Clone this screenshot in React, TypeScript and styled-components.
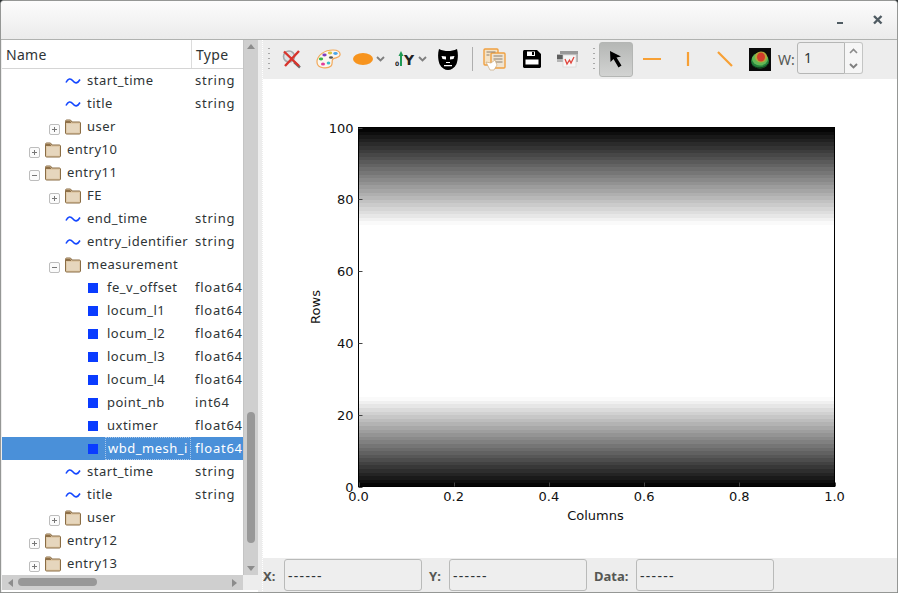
import React from 'react'
import styled, { createGlobalStyle } from 'styled-components'

const GlobalStyle = createGlobalStyle`
  html, body {
    margin: 0;
    padding: 0;
    background: #2e3436;
  }
  * {
    box-sizing: border-box;
  }
`

const Window = styled.div`
  width: 898px;
  height: 593px;
  display: flex;
  flex-direction: column;
  overflow: hidden;
  background: #ededed;
  border: 1px solid #959795;
  border-radius: 4px 4px 0 0;
  font-family: "Noto Sans", "DejaVu Sans", sans-serif;
  font-size: 13px;
  color: #2e3436;
`

const TitleBar = styled.div`
  height: 39px;
  flex: none;
  display: flex;
  justify-content: flex-end;
  align-items: flex-start;
  gap: 29px;
  padding: 14px 14px 0 0;
  background: linear-gradient(#fcfcfc, #ebebeb);
  border-bottom: 1px solid #b0b2b0;
`

const Body = styled.div`
  flex: 1;
  display: flex;
  min-height: 0;
`

const TreePanel = styled.div`
  width: 256px;
  flex: none;
  margin-left: 1px;
  display: grid;
  grid-template-columns: 241px 15px;
  grid-template-rows: 535px 15px;
  background: #fff;
`

const TreeView = styled.div`
  overflow: hidden;
  background: #fff;
`

const HeaderRow = styled.div`
  height: 29px;
  display: flex;
  align-items: center;
  border-bottom: 1px solid #d5d5d5;
  font-size: 14px;
  letter-spacing: 0.3px;
`

const HeaderCell = styled.div<{ $width: number; $divider?: boolean }>`
  width: ${p => p.$width}px;
  height: 28px;
  padding-left: 4px;
  line-height: 30px;
  border-right: ${p => (p.$divider ? '1px solid #dcdcdc' : 'none')};
`

const Row = styled.div<{ $selected?: boolean }>`
  height: 23px;
  display: flex;
  align-items: center;
  white-space: nowrap;
  overflow: hidden;
  color: ${p => (p.$selected ? '#fff' : '#2e3436')};
  background: ${p => (p.$selected ? '#4a90d9' : 'transparent')};
`

const NameCell = styled.div<{ $depth: number }>`
  width: 189px;
  height: 100%;
  flex: none;
  display: flex;
  align-items: center;
  padding-left: ${p => 27 + p.$depth * 20}px;
  overflow: hidden;
`

const TypeCell = styled.div`
  padding-left: 4px;
  line-height: 23px;
  height: 23px;
  letter-spacing: 0.75px;
`

const Expander = styled.span`
  width: 11px;
  height: 11px;
  flex: none;
  margin-right: 5px;
`

const NodeIcon = styled.span<{ $focused?: boolean }>`
  width: 16px;
  height: 16px;
  flex: none;
  margin-right: ${p => (p.$focused ? '4px' : '6px')};
  display: flex;
  align-items: center;
  justify-content: center;
`

const NodeLabel = styled.span<{ $focused?: boolean }>`
  letter-spacing: 0.5px;
  line-height: 21px;
  ${p =>
    p.$focused
      ? `
    flex: 1;
    height: 100%;
    padding-left: 2px;
    border: 1px dotted #a9c8ea;
  `
      : ''}
`

const VScrollTrack = styled.div`
  background: #cfcfcf;
  display: flex;
  flex-direction: column;
  align-items: center;
  padding-top: 372px;
  position: relative;
  border-left: 1px solid #c4c4c4;
`

const VThumb = styled.div`
  width: 8px;
  height: 131px;
  border-radius: 4px;
  background: #989898;
`

const ScrollArrow = styled.svg<{ $top?: number; $bottom?: number; $left?: number; $right?: number }>`
  position: absolute;
  ${p => (p.$top !== undefined ? `top: ${p.$top}px;` : '')}
  ${p => (p.$bottom !== undefined ? `bottom: ${p.$bottom}px;` : '')}
  ${p => (p.$left !== undefined ? `left: ${p.$left}px;` : '')}
  ${p => (p.$right !== undefined ? `right: ${p.$right}px;` : '')}
`

const HScrollTrack = styled.div`
  background: #cfcfcf;
  position: relative;
  padding: 3px 0 0 16px;
`

const HThumb = styled.div`
  width: 79px;
  height: 8px;
  border-radius: 4px;
  background: #989898;
`

const Corner = styled.div`
  background: #ededed;
`

const Splitter = styled.div`
  width: 5px;
  flex: none;
  background-color: #ededed;
  background-image: linear-gradient(#ffffff 50%, transparent 50%);
  background-size: 1px 2px;
  background-repeat: repeat-y;
  background-position: right top;
`

const RightPanel = styled.div`
  flex: 1;
  min-width: 0;
  display: flex;
  flex-direction: column;
`

const Toolbar = styled.div`
  height: 39px;
  flex: none;
  display: flex;
  align-items: center;
  padding: 0 0 1px 5px;
  background: #ededed;
`

const Grip = styled.div<{ $after: number }>`
  width: 2px;
  height: 26px;
  flex: none;
  margin-right: ${p => p.$after}px;
  background-image: radial-gradient(circle, #a8a8a8 1px, transparent 1px);
  background-size: 2px 5px;
`

const ToolIcon = styled.div<{ $width: number; $after?: number; $active?: boolean }>`
  width: ${p => p.$width}px;
  height: 35px;
  flex: none;
  margin-right: ${p => p.$after ?? 0}px;
  display: flex;
  align-items: center;
  justify-content: center;
  border-radius: 3px;
  border: ${p => (p.$active ? '1px solid #b4b6b4' : 'none')};
  background: ${p => (p.$active ? 'linear-gradient(#b5b7b5, #d2d3d2)' : 'transparent')};
`

const ToolSeparator = styled.div`
  width: 1px;
  height: 24px;
  flex: none;
  margin-right: 10px;
  background: #aeaeae;
`

const WidthLabel = styled.span`
  width: 19px;
  flex: none;
  font-size: 14px;
  color: #555753;
`

const SpinInput = styled.div`
  width: 48px;
  height: 32px;
  flex: none;
  margin-bottom: 2px;
  padding-left: 6px;
  line-height: 30px;
  font-size: 14px;
  border: 1px solid #b5b6b5;
  border-radius: 3px 0 0 3px;
  background: #eeeeee;
`

const SpinButtons = styled.div`
  width: 18px;
  height: 32px;
  flex: none;
  margin-bottom: 2px;
  display: flex;
  flex-direction: column;
  align-items: center;
  justify-content: space-around;
  border: 1px solid #c4c5c4;
  border-left: none;
  border-radius: 0 3px 3px 0;
  background: #f6f6f6;
`

const ChartArea = styled.div`
  flex: 1;
  min-height: 0;
  background: #fff;
`

const ChartSvg = styled.svg`
  display: block;
  font-family: "DejaVu Sans", sans-serif;
  font-size: 13px;
  fill: #111;
`

const StatusBar = styled.div`
  height: 34px;
  flex: none;
  display: flex;
  align-items: center;
  background: #ededed;
`

const StatusLabel = styled.span<{ $width: number }>`
  width: ${p => p.$width}px;
  flex: none;
  padding-top: 2px;
  font-weight: 700;
  font-size: 13px;
  color: #555753;
`

const StatusField = styled.div`
  width: 138px;
  height: 32px;
  flex: none;
  margin-right: 7px;
  padding-left: 3px;
  line-height: 31px;
  font-size: 14px;
  letter-spacing: 1.3px;
  border: 1px solid #b9bab9;
  border-radius: 3px;
  background: #eeeeee;
`

type NodeKind = 'folder' | 'wave' | 'data'

type TreeNode = {
  name: string
  depth: number
  kind: NodeKind
  type?: string
  expander?: 'plus' | 'minus'
  selected?: boolean
}

const nodes: TreeNode[] = [
  { name: 'start_time', depth: 1, kind: 'wave', type: 'string' },
  { name: 'title', depth: 1, kind: 'wave', type: 'string' },
  { name: 'user', depth: 1, kind: 'folder', expander: 'plus' },
  { name: 'entry10', depth: 0, kind: 'folder', expander: 'plus' },
  { name: 'entry11', depth: 0, kind: 'folder', expander: 'minus' },
  { name: 'FE', depth: 1, kind: 'folder', expander: 'plus' },
  { name: 'end_time', depth: 1, kind: 'wave', type: 'string' },
  { name: 'entry_identifier', depth: 1, kind: 'wave', type: 'string' },
  { name: 'measurement', depth: 1, kind: 'folder', expander: 'minus' },
  { name: 'fe_v_offset', depth: 2, kind: 'data', type: 'float64' },
  { name: 'locum_l1', depth: 2, kind: 'data', type: 'float64' },
  { name: 'locum_l2', depth: 2, kind: 'data', type: 'float64' },
  { name: 'locum_l3', depth: 2, kind: 'data', type: 'float64' },
  { name: 'locum_l4', depth: 2, kind: 'data', type: 'float64' },
  { name: 'point_nb', depth: 2, kind: 'data', type: 'int64' },
  { name: 'uxtimer', depth: 2, kind: 'data', type: 'float64' },
  { name: 'wbd_mesh_i', depth: 2, kind: 'data', type: 'float64', selected: true },
  { name: 'start_time', depth: 1, kind: 'wave', type: 'string' },
  { name: 'title', depth: 1, kind: 'wave', type: 'string' },
  { name: 'user', depth: 1, kind: 'folder', expander: 'plus' },
  { name: 'entry12', depth: 0, kind: 'folder', expander: 'plus' },
  { name: 'entry13', depth: 0, kind: 'folder', expander: 'plus' },
]

function ExpanderBox({ mode }: { mode: 'plus' | 'minus' }) {
  return (
    <svg width="11" height="11" viewBox="0 0 11 11">
      <rect x="0.5" y="0.5" width="10" height="10" rx="1.5" fill="#fbfbfb" stroke="#bdbdbd" />
      <path d={mode === 'plus' ? 'M3 5.5h5M5.5 3v5' : 'M3 5.5h5'} stroke="#777" fill="none" />
    </svg>
  )
}

function FolderIcon() {
  return (
    <svg width="16" height="16" viewBox="0 0 16 16">
      <path d="M0.5 14V2.2C0.5 1.5 1 1 1.6 1H5.5L7 3H14.4C15 3 15.5 3.5 15.5 4V14C15.5 14.6 15 15 14.4 15H1.6C1 15 0.5 14.6 0.5 14Z" fill="#dfc9a8" stroke="#8a6d45" />
      <path d="M1 2H5.2L6.5 4H1Z" fill="#8f7048" />
      <path d="M2 5H14V13.5H2Z" fill="#e6d6bd" />
    </svg>
  )
}

function WaveIcon() {
  return (
    <svg width="16" height="10" viewBox="0 0 16 10">
      <path d="M1 6.5C3 2.5 5.5 1.8 7.8 4.8C10 7.8 12.5 7.8 15 3.5" fill="none" stroke="#1548ff" strokeWidth="1.6" />
    </svg>
  )
}

function DataIcon() {
  return (
    <svg width="10" height="10" viewBox="0 0 10 10">
      <rect width="10" height="10" fill="#0a3cff" />
    </svg>
  )
}

const nodeIcons: Record<NodeKind, React.ReactNode> = {
  folder: <FolderIcon />,
  wave: <WaveIcon />,
  data: <DataIcon />,
}

function Chevron() {
  return (
    <svg width="9" height="6" viewBox="0 0 9 6">
      <path d="M1 1l3.5 3.5L8 1" fill="none" stroke="#7f7f7f" strokeWidth="1.9" />
    </svg>
  )
}

function DeleteIcon() {
  return (
    <svg width="22" height="22" viewBox="0 0 22 22">
      <circle cx="8" cy="8.5" r="5.5" fill="#dfe3e6" stroke="#a6a9ab" strokeWidth="1.6" />
      <path d="M13 14l6 5.5" stroke="#6e6e6e" strokeWidth="2.4" />
      <path d="M3 3.5l15 14.5M18 3L4 18" stroke="#d8342c" strokeWidth="2.4" fill="none" />
    </svg>
  )
}

function PaletteIcon() {
  return (
    <svg width="25" height="20" viewBox="0 0 25 20">
      <path d="M1 13C1 6 9 1 17 1C22 1 24.5 3 24 6C23.5 9 19 8.5 17 10C15 11.5 17.5 14 15 17C12 20 1 20 1 13Z" fill="#fbf7ef" stroke="#f2a85a" strokeWidth="1.2" />
      <ellipse cx="8.5" cy="6" rx="2.2" ry="1.4" fill="#7d3fc0" />
      <ellipse cx="14" cy="4" rx="2.2" ry="1.4" fill="#d7c840" />
      <ellipse cx="19.5" cy="4.5" rx="2.2" ry="1.4" fill="#4aa6e8" />
      <ellipse cx="5" cy="10" rx="2.2" ry="1.4" fill="#35b54a" />
      <ellipse cx="7" cy="15" rx="2" ry="1.5" fill="#e23b9b" />
      <ellipse cx="12.5" cy="14" rx="1.8" ry="1.6" fill="#3ac0c8" />
      <ellipse cx="15" cy="8.5" rx="2" ry="1.3" fill="#555" />
    </svg>
  )
}

function MarkerIcon() {
  return (
    <svg width="20" height="12" viewBox="0 0 20 12">
      <ellipse cx="10" cy="6" rx="10" ry="6" fill="#f7941e" />
    </svg>
  )
}

function AxisIcon() {
  return (
    <svg width="22" height="18" viewBox="0 0 22 18">
      <text x="0" y="16" fontFamily="'DejaVu Sans', sans-serif" fontSize="6" fontWeight="700" fill="#222">0</text>
      <path d="M6 16V4" stroke="#1f9a55" strokeWidth="2" />
      <path d="M3.5 6L6 1L8.5 6Z" fill="#1f9a55" />
      <text x="9" y="15" fontFamily="'DejaVu Sans', sans-serif" fontSize="14" fontWeight="700" fill="#222">Y</text>
    </svg>
  )
}

function MaskIcon() {
  return (
    <svg width="20" height="22" viewBox="0 0 20 22">
      <path d="M1 1C4 2.5 7 3 10 3C13 3 16 2.5 19 1C20.5 6 20 12 18.5 16C16.5 20 13 22 10 22C7 22 3.5 20 1.5 16C0 12 -0.5 6 1 1Z" fill="#000" />
      <path d="M3.5 8L8 8.5V11.5L4.5 11Z M16.5 8L12 8.5V11.5L15.5 11Z" fill="#fff" />
      <path d="M6 17H14V18.2H6Z M8 14H12V15H8Z" fill="#fff" />
    </svg>
  )
}

function CopyIcon() {
  return (
    <svg width="23" height="23" viewBox="0 0 23 23">
      <rect x="1" y="1" width="14" height="16" rx="1" fill="#f5e3c6" stroke="#f0a040" strokeWidth="1.4" />
      <rect x="8" y="5" width="14" height="15" rx="1" fill="#efe4d2" stroke="#f0a040" strokeWidth="1.4" />
      <path d="M3.5 4h9M3.5 7h3M10.5 8h9M10.5 11h9M10.5 14h9" stroke="#8a7f70" strokeWidth="1" />
      <path d="M3 14l5 1 4-3 2 5-3 5H7z" fill="#fff" stroke="#c8a77a" strokeWidth="0.7" />
    </svg>
  )
}

function SaveIcon() {
  return (
    <svg width="18" height="18" viewBox="0 0 18 18">
      <path d="M0 1.5C0 .7.7 0 1.5 0H14L18 4V16.5C18 17.3 17.3 18 16.5 18H1.5C.7 18 0 17.3 0 16.5Z" fill="#000" />
      <rect x="4" y="1.5" width="8" height="4.5" fill="#fff" />
      <rect x="9" y="2" width="2" height="3" fill="#000" />
      <rect x="2.5" y="9.5" width="13" height="5" fill="#fff" />
    </svg>
  )
}

function PrintIcon() {
  return (
    <svg width="21" height="18" viewBox="0 0 21 18">
      <path d="M3 1H21V5H3Z" fill="#999" />
      <path d="M0 4H21V12H0Z" fill="#b4b4b4" />
      <path d="M0 5H6V9H0Z" fill="#5e5e5e" />
      <rect x="6" y="5" width="13" height="12" fill="#f6f6f6" stroke="#d0d0d0" strokeWidth="0.6" />
      <path d="M8 9l2 5 2.5-4 1.5 3 3-6" fill="none" stroke="#e0443c" strokeWidth="1.3" />
    </svg>
  )
}

function ArrowIcon() {
  return (
    <svg width="15" height="19" viewBox="0 0 15 19">
      <path d="M1 1L1.5 12L4.5 9L9.5 17.5L12.5 15.5L7.5 7.5L12 6.5Z" fill="#000" />
    </svg>
  )
}

function LineIcon({ d }: { d: string }) {
  return (
    <svg width="18" height="18" viewBox="0 0 18 18">
      <path d={d} stroke="#f7a035" strokeWidth="2.2" fill="none" />
    </svg>
  )
}

function HeatmapIcon() {
  return (
    <svg width="22" height="23" viewBox="0 0 22 23">
      <rect width="22" height="23" fill="#0a0a0a" />
      <ellipse cx="11" cy="13" rx="9" ry="7.5" fill="#23803c" />
      <ellipse cx="11" cy="11" rx="8" ry="6.5" fill="#62b856" />
      <ellipse cx="12" cy="9" rx="6" ry="5.5" fill="#b4a63a" />
      <ellipse cx="12" cy="9" rx="4" ry="4.5" fill="#d23c2a" />
      <path d="M3 17C7 21 15 21 19 16" stroke="#103818" fill="none" />
    </svg>
  )
}

// plot box inside the chart area, on the centre of its 1px frame
const plot = { left: 95.5, top: 48.5, width: 476, height: 359 }

const intensity = (row: number) => {
  if (row < 25) return (row + 0.5) / 25
  if (row >= 73) return (100 - row - 0.5) / 27
  return 1
}

const bands = Array.from({ length: 100 }, (_, row) => {
  const level = Math.round(Math.min(1, intensity(row)) * 255)
  return { row, color: `rgb(${level},${level},${level})` }
})

const xTicks = [0, 0.2, 0.4, 0.6, 0.8, 1]
const yTicks = [0, 20, 40, 60, 80, 100]

function Chart() {
  const xAt = (v: number) => plot.left + v * plot.width
  const yAt = (v: number) => plot.top + plot.height * (1 - v / 100)
  return (
    <ChartSvg width="634" height="479" viewBox="0 0 634 479">
      {bands.map(b => (
        <rect
          key={b.row}
          x={plot.left}
          y={yAt(b.row + 1)}
          width={plot.width}
          height={plot.height / 100 + 0.5}
          fill={b.color}
          shapeRendering="crispEdges"
        />
      ))}
      <rect x={plot.left} y={plot.top} width={plot.width} height={plot.height} fill="none" stroke="#000" />
      {xTicks.map(v => (
        <g key={v}>
          <path d={`M${Math.round(xAt(v)) + 0.5} ${plot.top + plot.height}v-4`} stroke="#444" />
          <text x={xAt(v)} y={plot.top + plot.height + 14} textAnchor="middle">{v.toFixed(1)}</text>
        </g>
      ))}
      {yTicks.map(v => (
        <g key={v}>
          <path d={`M${plot.left} ${Math.round(yAt(v)) + 0.5}h4`} stroke="#444" />
          <text x={plot.left - 5} y={yAt(v) + 5} textAnchor="end">{v}</text>
        </g>
      ))}
      <text x={plot.left + plot.width / 2 - 1} y={plot.top + plot.height + 33} textAnchor="middle">Columns</text>
      <text transform={`translate(57 ${plot.top + plot.height / 2}) rotate(-90)`} textAnchor="middle">Rows</text>
    </ChartSvg>
  )
}

export default function App() {
  return (
    <>
      <GlobalStyle />
      <Window>
        <TitleBar>
          <svg width="7" height="12" viewBox="0 0 7 12">
            <rect x="0" y="7" width="6" height="2" fill="#4f5b62" />
          </svg>
          <svg width="10" height="10" viewBox="0 0 10 10">
            <path d="M1 1l7.5 7.5M8.5 1L1 8.5" stroke="#4f5b62" strokeWidth="2.4" />
          </svg>
        </TitleBar>
        <Body>
          <TreePanel>
            <TreeView>
              <HeaderRow>
                <HeaderCell $width={190} $divider>Name</HeaderCell>
                <HeaderCell $width={51}>Type</HeaderCell>
              </HeaderRow>
              {nodes.map((node, i) => (
                <Row key={i} $selected={node.selected}>
                  <NameCell $depth={node.depth}>
                    <Expander>{node.expander && <ExpanderBox mode={node.expander} />}</Expander>
                    <NodeIcon $focused={node.selected}>{nodeIcons[node.kind]}</NodeIcon>
                    <NodeLabel $focused={node.selected}>{node.name}</NodeLabel>
                  </NameCell>
                  {node.type && <TypeCell>{node.type}</TypeCell>}
                </Row>
              ))}
            </TreeView>
            <VScrollTrack>
              <ScrollArrow $top={4} $left={3} width="8" height="6" viewBox="0 0 8 6">
                <path d="M0 5L4 0L8 5Z" fill="#8c8c8c" />
              </ScrollArrow>
              <VThumb />
              <ScrollArrow $bottom={4} $left={3} width="8" height="6" viewBox="0 0 8 6">
                <path d="M0 1L4 6L8 1Z" fill="#8c8c8c" />
              </ScrollArrow>
            </VScrollTrack>
            <HScrollTrack>
              <ScrollArrow $top={4} $left={6} width="6" height="8" viewBox="0 0 6 8">
                <path d="M5 0L0 4L5 8Z" fill="#8c8c8c" />
              </ScrollArrow>
              <HThumb />
              <ScrollArrow $top={4} $right={6} width="6" height="8" viewBox="0 0 6 8">
                <path d="M1 0L6 4L1 8Z" fill="#8c8c8c" />
              </ScrollArrow>
            </HScrollTrack>
            <Corner />
          </TreePanel>
          <Splitter />
          <RightPanel>
            <Toolbar>
              <Grip $after={9} />
              <ToolIcon $width={26} $after={11}><DeleteIcon /></ToolIcon>
              <ToolIcon $width={25} $after={12}><PaletteIcon /></ToolIcon>
              <ToolIcon $width={20} $after={3}><MarkerIcon /></ToolIcon>
              <ToolIcon $width={9} $after={10}><Chevron /></ToolIcon>
              <ToolIcon $width={22} $after={1}><AxisIcon /></ToolIcon>
              <ToolIcon $width={9} $after={11}><Chevron /></ToolIcon>
              <ToolIcon $width={20} $after={14}><MaskIcon /></ToolIcon>
              <ToolSeparator />
              <ToolIcon $width={23} $after={17}><CopyIcon /></ToolIcon>
              <ToolIcon $width={18} $after={16}><SaveIcon /></ToolIcon>
              <ToolIcon $width={21} $after={15}><PrintIcon /></ToolIcon>
              <Grip $after={4} />
              <ToolIcon $width={34} $after={10} $active><ArrowIcon /></ToolIcon>
              <ToolIcon $width={18} $after={18}><LineIcon d="M0 9H18" /></ToolIcon>
              <ToolIcon $width={18} $after={19}><LineIcon d="M9 2V16" /></ToolIcon>
              <ToolIcon $width={18} $after={15}><LineIcon d="M2 2L16 16" /></ToolIcon>
              <ToolIcon $width={22} $after={7}><HeatmapIcon /></ToolIcon>
              <WidthLabel>W:</WidthLabel>
              <SpinInput>1</SpinInput>
              <SpinButtons>
                <svg width="9" height="6" viewBox="0 0 9 6">
                  <path d="M1 5l3.5-3.5L8 5" fill="none" stroke="#8a8a8a" strokeWidth="1.6" />
                </svg>
                <Chevron />
              </SpinButtons>
            </Toolbar>
            <ChartArea>
              <Chart />
            </ChartArea>
            <StatusBar>
              <StatusLabel $width={21}>X:</StatusLabel>
              <StatusField>------</StatusField>
              <StatusLabel $width={20}>Y:</StatusLabel>
              <StatusField>------</StatusField>
              <StatusLabel $width={42}>Data:</StatusLabel>
              <StatusField>------</StatusField>
            </StatusBar>
          </RightPanel>
        </Body>
      </Window>
    </>
  )
}
